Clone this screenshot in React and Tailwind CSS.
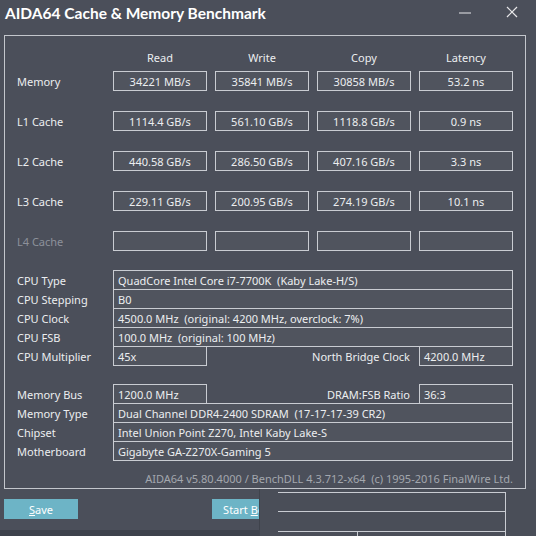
import React from "react";

const font = { fontFamily: '"Noto Sans", "Open Sans", sans-serif' };

function ValBox({ children }) {
  return (
    <div className="w-[94px] h-[20px] border border-[#c9ccd2] bg-[#50545e] flex items-center justify-center text-[#eceef0]">
      {children}
    </div>
  );
}

function BenchRow({ label, vals, dim }) {
  return (
    <div className="flex items-center h-[20px]">
      <div className={`w-[96px] ${dim ? "text-[#8d919a]" : "text-[#eceef0]"}`}>{label}</div>
      <div className="flex gap-[8px]">
        {[0, 1, 2, 3].map((i) => (
          <ValBox key={i}>{vals ? vals[i] : ""}</ValBox>
        ))}
      </div>
    </div>
  );
}

function InfoRow({ label, value }) {
  return (
    <div className="flex items-center h-[20px] -mt-px first:mt-0">
      <div className="w-[96px] text-[#eceef0]">{label}</div>
      <div className="w-[400px] h-[20px] border border-[#c9ccd2] bg-[#50545e] flex items-center pl-[4px] text-[#eceef0] whitespace-pre">
        {value}
      </div>
    </div>
  );
}

function SplitRow({ label, value, label2, value2 }) {
  return (
    <div className="flex items-center w-[496px] h-[20px] -mt-px first:mt-0">
      <div className="w-[96px] text-[#eceef0]">{label}</div>
      <div className="w-[94px] h-[20px] border border-[#c9ccd2] bg-[#50545e] flex items-center pl-[4px] text-[#eceef0]">
        {value}
      </div>
      <div className="flex-1 text-right pr-[9px] text-[#eceef0]">{label2}</div>
      <div className="w-[94px] h-[20px] border border-[#c9ccd2] bg-[#50545e] flex items-center pl-[4px] text-[#eceef0]">
        {value2}
      </div>
    </div>
  );
}

export default function App() {
  return (
    <div
      className="relative w-[536px] h-[536px] overflow-hidden bg-[#4b4f5a] text-[11px] leading-none"
      style={font}
    >
      {/* title bar */}
      <div className="flex items-center h-[35px] pl-[5px] pr-[18px] pb-[7px]">
        <div
          className="text-[15.5px] font-bold text-white"
          style={{ fontFamily: 'Lato, "Noto Sans", sans-serif' }}
        >
          AIDA64 Cache &amp; Memory Benchmark
        </div>
        <div className="flex-1" />
        <svg width="14" height="14" viewBox="0 0 14 14" className="mr-[34px] mb-[3px]">
          <line x1="1" y1="7" x2="13" y2="7" stroke="#e8e8ea" strokeWidth="1" />
        </svg>
        <svg width="12" height="12" viewBox="0 0 12 12" className="mb-[5px]">
          <line x1="1" y1="1" x2="11" y2="11" stroke="#e8e8ea" strokeWidth="1.2" />
          <line x1="11" y1="1" x2="1" y2="11" stroke="#e8e8ea" strokeWidth="1.2" />
        </svg>
      </div>

      {/* group box */}
      <div className="ml-[4px] w-[522px] h-[454px] border border-[#c3c6cc] pl-[12px] pt-[13px]">
        <div className="flex h-[16px] items-center text-[#eceef0]">
          <div className="w-[96px]" />
          <div className="flex gap-[8px]">
            {["Read", "Write", "Copy", "Latency"].map((h) => (
              <div key={h} className="w-[94px] text-center">{h}</div>
            ))}
          </div>
        </div>
        <div className="mt-[6px] flex flex-col gap-[20px]">
          <BenchRow label="Memory" vals={["34221 MB/s", "35841 MB/s", "30858 MB/s", "53.2 ns"]} />
          <BenchRow label="L1 Cache" vals={["1114.4 GB/s", "561.10 GB/s", "1118.8 GB/s", "0.9 ns"]} />
          <BenchRow label="L2 Cache" vals={["440.58 GB/s", "286.50 GB/s", "407.16 GB/s", "3.3 ns"]} />
          <BenchRow label="L3 Cache" vals={["229.11 GB/s", "200.95 GB/s", "274.19 GB/s", "10.1 ns"]} />
          <BenchRow label="L4 Cache" dim />
        </div>

        <div className="mt-[19px] flex flex-col">
          <InfoRow label="CPU Type" value="QuadCore Intel Core i7-7700K  (Kaby Lake-H/S)" />
          <InfoRow label="CPU Stepping" value="B0" />
          <InfoRow label="CPU Clock" value="4500.0 MHz  (original: 4200 MHz, overclock: 7%)" />
          <InfoRow label="CPU FSB" value="100.0 MHz  (original: 100 MHz)" />
          <SplitRow label="CPU Multiplier" value="45x" label2="North Bridge Clock" value2="4200.0 MHz" />
        </div>

        <div className="mt-[18px] flex flex-col">
          <SplitRow label="Memory Bus" value="1200.0 MHz" label2="DRAM:FSB Ratio" value2="36:3" />
          <InfoRow label="Memory Type" value="Dual Channel DDR4-2400 SDRAM  (17-17-17-39 CR2)" />
          <InfoRow label="Chipset" value="Intel Union Point Z270, Intel Kaby Lake-S" />
          <InfoRow label="Motherboard" value="Gigabyte GA-Z270X-Gaming 5" />
        </div>

        <div className="mt-[12px] w-[496px] text-right text-[#a3a7ae] whitespace-pre">
          AIDA64 v5.80.4000 / BenchDLL 4.3.712-x64  (c) 1995-2016 FinalWire Ltd.
        </div>
      </div>

      {/* buttons */}
      <div className="flex mt-[10px] pl-[4px] gap-[134px]">
        <div className="w-[74px] h-[20px] bg-[#6db4c6] flex items-center justify-center text-white">
          <span><span className="underline">S</span>ave</span>
        </div>
        <div className="w-[82px] h-[20px] bg-[#6db4c6] flex items-center justify-center text-white">
          <span>Start <span className="underline">B</span>ench</span>
        </div>
      </div>

      {/* glitch overlay at bottom right */}
      <div className="absolute left-[259px] top-[489px] w-[277px] h-[47px] bg-[#4a4e58] border-l border-[#3f434c]">
        <div className="absolute left-[18px] top-[3px] w-[227px] h-px bg-[#c9ccd2]" />
        <div className="absolute left-[18px] top-[22px] w-[227px] h-px bg-[#c9ccd2]" />
        <div className="absolute left-[18px] top-[42px] w-[227px] h-px bg-[#c9ccd2]" />
        <div className="absolute left-[245px] top-[3px] w-px h-[44px] bg-[#c9ccd2]" />
        <div className="absolute left-[97px] top-[42px] w-px h-[5px] bg-[#c9ccd2]" />
      </div>
      <div className="absolute left-0 top-[530px] w-[259px] h-[6px] bg-[#3d424c]" />
    </div>
  );
}
